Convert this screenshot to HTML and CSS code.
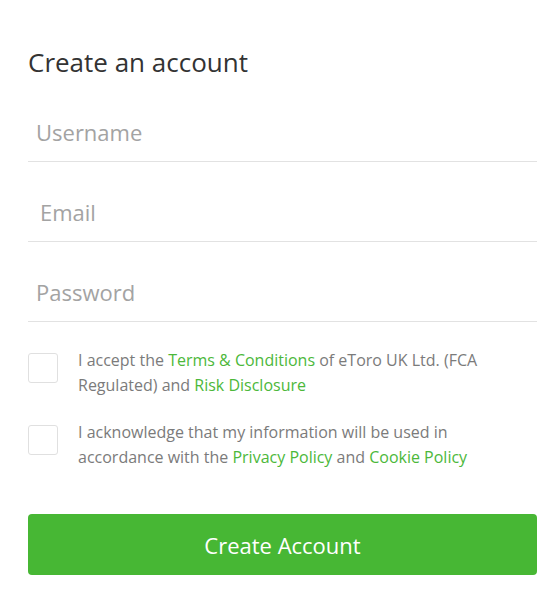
FILE: index.html
```html
<!DOCTYPE html>
<html lang="en">
<head>
    <meta charset="UTF-8">
    <meta name="viewport" content="width=device-width, initial-scale=1.0">
    <title>Create an account</title>
    <link rel="stylesheet" href="styles.css">
</head>
<body>

<div class="container">
    <h2 class="title">Create an account</h2>
    <form id="signupForm">
        <input type="text" class="field" name="username" placeholder="Username">
        <input type="email" class="field field-email" name="email" placeholder="Email">
        <input type="password" class="field" name="password" placeholder="Password">

        <div class="agreements">
            <label class="agree">
                <span class="box"></span>
                <span class="agree-text">I accept the <a href="#">Terms &amp; Conditions</a> of eToro UK Ltd. (FCA Regulated) and <a href="#">Risk Disclosure</a></span>
            </label>
            <label class="agree">
                <span class="box"></span>
                <span class="agree-text">I acknowledge that my information will be used in accordance with the <a href="#">Privacy Policy</a> and <a href="#">Cookie Policy</a></span>
            </label>
        </div>

        <button type="submit" class="submit">Create Account</button>
    </form>
</div>

</body>
</html>
```

FILE: styles.css
```css
body {
    margin: 0;
    font-family: "Open Sans", Arial, sans-serif;
    background-color: #fff;
}

.container {
    padding: 45px 22px 0 28px;
}

.title {
    margin: 0 0 3px 0;
    font-size: 26px;
    font-weight: 400;
    line-height: 34px;
    color: #333;
}

.field {
    display: block;
    box-sizing: border-box;
    width: 100%;
    height: 80px;
    padding: 35px 8px 14px 8px;
    border: none;
    border-bottom: 1px solid #e2e2e2;
    font-family: inherit;
    font-size: 22px;
    line-height: 30px;
    color: #333;
    outline: none;
}

.field::placeholder {
    color: #a3a3a3;
}

.field-email {
    padding-left: 12px;
}

.agreements {
    display: flex;
    flex-direction: column;
    gap: 22px;
    margin-top: 26px;
}

.agree {
    display: flex;
    align-items: flex-start;
    gap: 20px;
    cursor: pointer;
}

.box {
    flex: none;
    width: 30px;
    height: 30px;
    margin-top: 5px;
    box-sizing: border-box;
    border: 1px solid #e0e0e0;
    border-radius: 3px;
}

.agree-text {
    max-width: 410px;
    font-size: 16px;
    line-height: 25px;
    color: #7b7b7b;
}

.agree-text a {
    color: #4cb83a;
    text-decoration: none;
}

.submit {
    display: block;
    width: 100%;
    height: 61px;
    margin-top: 44px;
    border: none;
    border-radius: 4px;
    background-color: #47b734;
    color: #fff;
    font-family: inherit;
    font-size: 22px;
    cursor: pointer;
}

.submit:hover {
    background-color: #3fa52e;
}
```
